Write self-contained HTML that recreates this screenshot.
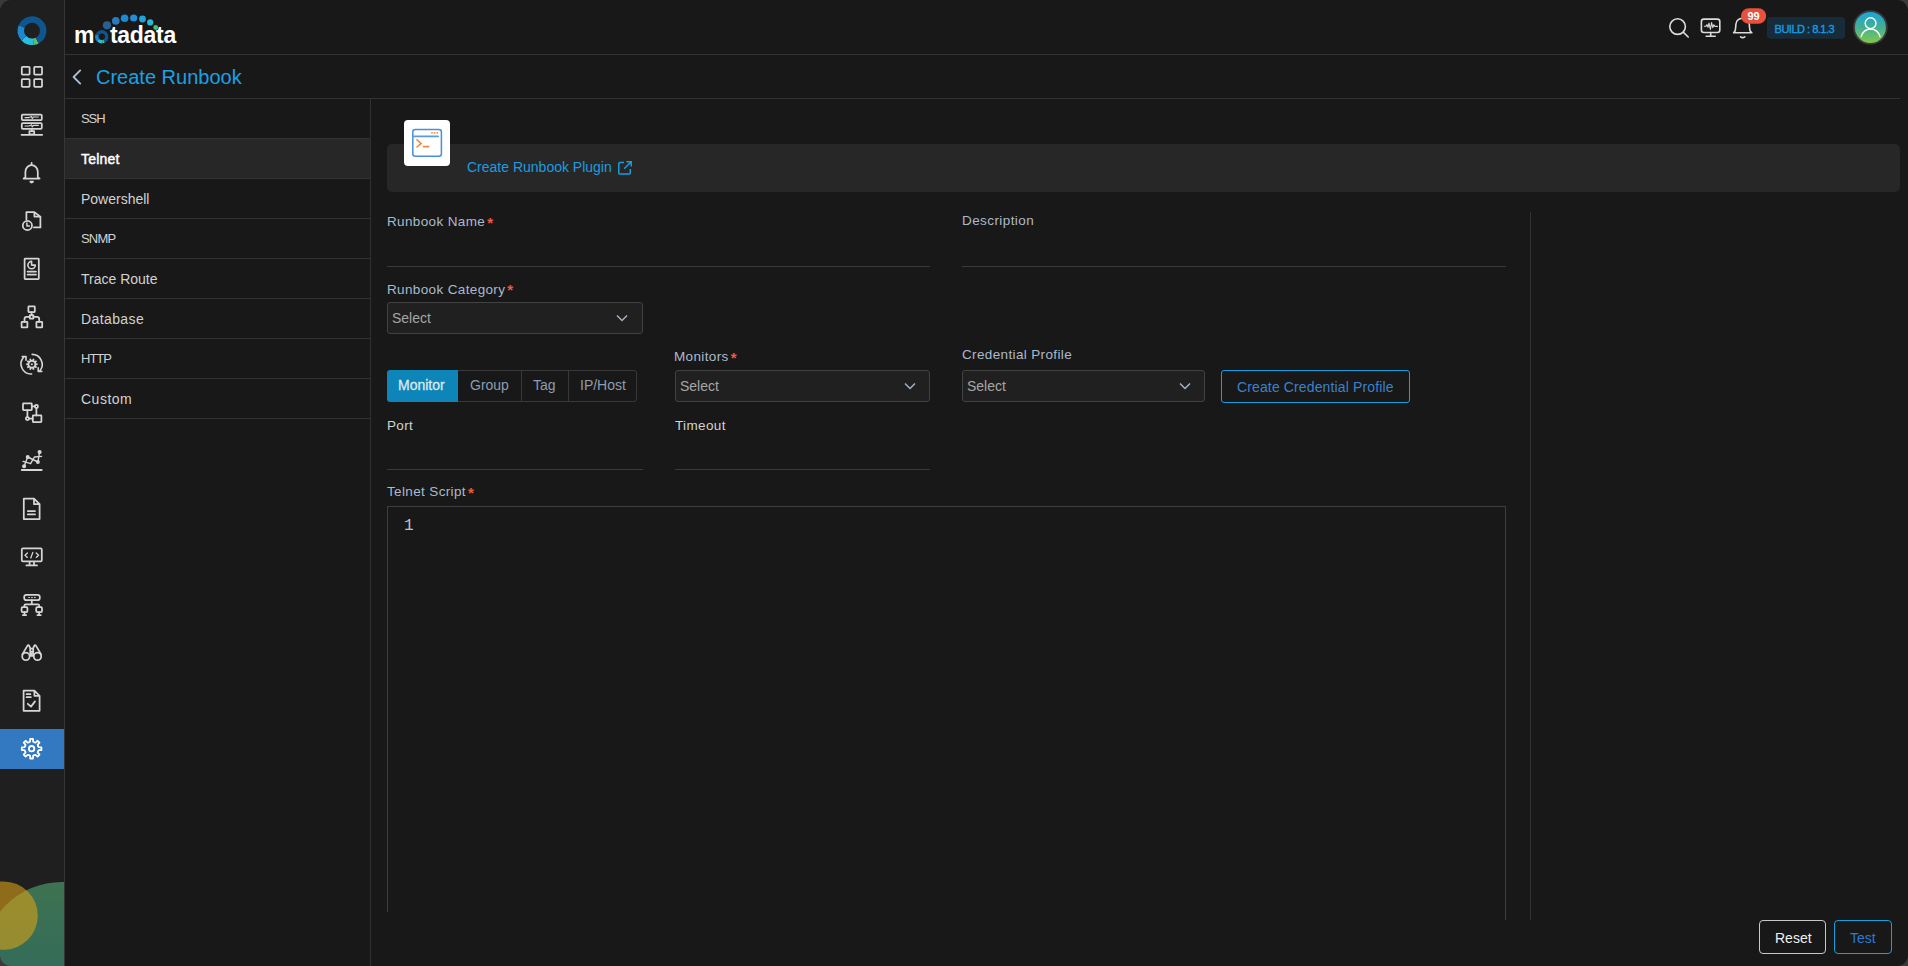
<!DOCTYPE html>
<html><head><meta charset="utf-8">
<style>
*{margin:0;padding:0;box-sizing:border-box}
html,body{width:1908px;height:966px;overflow:hidden;background:#181818;font-family:"Liberation Sans",sans-serif}
.a{position:absolute}
.t{position:absolute;white-space:nowrap;line-height:14px;font-size:14px}
.lbl{color:#abbacc;font-size:13.5px !important;letter-spacing:0.36px;margin-top:-0.8px}
.req{color:#ec5a40;font-size:15px;font-weight:bold;margin-left:2px;position:relative;top:1.5px}
.hl{position:absolute;height:1px;background:#363636}
.vl{position:absolute;width:1px;background:#363636}
.sel{position:absolute;border:1px solid #424242;background:#202020;border-radius:3px;height:32px}
.sel span{position:absolute;left:4px;top:8px;font-size:14px;line-height:14px;color:#a6a6a6}
.sel svg{position:absolute;top:11px}
.nav{position:absolute;left:65px;width:305px;height:40px;border-bottom:1px solid #323232}
.nav span{position:absolute;left:16px;top:13px;font-size:14px;line-height:14px;color:#d2d2d2}
</style></head>
<body>
<!-- sidebar -->
<div class="a" style="left:0;top:0;width:64px;height:966px;background:#1f1f1f"></div>
<div class="vl" style="left:64px;top:0;height:966px;background:#363636"></div>


<!-- sidebar icons -->
<svg class="a" style="left:0;top:0" width="64" height="966" viewBox="0 0 64 966">
<path d="M37.23 40.54 A11.15 11.15 0 0 1 33.36 41.77" stroke="#5dbd6a" stroke-width="6.5" fill="none"/><path d="M33.36 41.77 A11.15 11.15 0 0 1 23.85 38.30" stroke="#2bbde0" stroke-width="6.5" fill="none"/><path d="M23.85 38.30 A11.15 11.15 0 0 1 21.66 26.52" stroke="#1e86cc" stroke-width="6.5" fill="none"/><path d="M21.66 26.52 A11.15 11.15 0 1 1 37.23 40.54" stroke="#0e5690" stroke-width="6.5" fill="none"/>
<g fill="none" stroke="#d6d6d6" stroke-width="1.75" stroke-linecap="round" stroke-linejoin="round">
<!-- grid -->
<rect x="21.8" y="66.8" width="7.8" height="7.8" rx="0.8"/><rect x="34.2" y="66.8" width="7.8" height="7.8" rx="0.8"/>
<rect x="21.8" y="79" width="7.8" height="7.8" rx="0.8"/><rect x="34.2" y="79" width="7.8" height="7.8" rx="0.8"/>
<!-- server -->
<rect x="21.8" y="114.5" width="20" height="5.6" rx="1"/><rect x="21.8" y="123" width="20" height="5.8" rx="1"/>
<path d="M21.5 134.8 H42.2 M31.8 128.8 V131.2 M29.4 131.2 H34.2 V134.4 H29.4 Z" />
<path d="M25 117.6 H29 L31.6 116.4 L32.2 118.6 L33.4 117 H38.4 M25 126 H29 L31.6 124.8 L32.2 127 L33.4 125.4 H38.4" stroke-width="1.1"/>
<!-- bell -->
<path d="M31.6 162.8 V164.6 M25.4 177.4 V172 A6.2 6.8 0 0 1 37.8 172 V177.4 L39.6 178.5 H23.6 Z M30.3 181.7 H33 L31.65 182.6 Z"/>
<!-- doc clock -->
<path d="M26.4 219.4 V212.2 H34.4 L40.4 216.6 V227.4 H33.9 M34.4 212.2 V216.6 H40.4"/>
<circle cx="27.4" cy="225.5" r="4.6"/><path d="M26.9 222.9 V226.1 H29.4" stroke-width="1.5"/>
<!-- report -->
<rect x="24.6" y="258.6" width="14.2" height="20.4" rx="0.6"/>
<path d="M31.6 261.4 A3.7 3.7 0 1 0 35.3 265.1 H31.6 Z" stroke-width="1.6"/>
<path d="M27.6 271.6 H36 M27.6 274.6 H36"/>
<!-- hierarchy -->
<rect x="28.4" y="306.4" width="6.4" height="5.6" rx="0.5"/><rect x="29.8" y="315" width="3.6" height="3.6" rx="0.3"/>
<rect x="21.6" y="321.8" width="5.8" height="5.6" rx="0.5"/><rect x="36.4" y="321.8" width="5.8" height="5.6" rx="0.5"/>
<path d="M31.6 312 V315 M29.8 316.8 H26.6 Q24.5 316.8 24.5 319 V321.8 M33.4 316.8 H36.8 Q39.2 316.8 39.2 319 V321.8"/>
<!-- gear cycle -->
<path d="M31.6 374 A10 10 0 0 1 23.4 357.6 M32.2 354.4 A10 10 0 0 1 40 370.6" stroke-width="1.6"/>
<path d="M22.2 356.6 H26 V360.2 M38.2 367.8 V371.4 H41.8" stroke-width="1.6"/>
<path d="M36.08 363.20 L37.64 363.38 L37.64 365.02 L36.08 365.20 L35.87 365.85 L37.03 366.91 L36.07 368.24 L34.69 367.47 L34.15 367.87 L34.45 369.41 L32.90 369.91 L32.24 368.49 L31.56 368.49 L30.90 369.91 L29.35 369.41 L29.65 367.87 L29.11 367.47 L27.73 368.24 L26.77 366.91 L27.93 365.85 L27.72 365.20 L26.16 365.02 L26.16 363.38 L27.72 363.20 L27.93 362.55 L26.77 361.49 L27.73 360.16 L29.11 360.93 L29.65 360.53 L29.35 358.99 L30.90 358.49 L31.56 359.91 L32.24 359.91 L32.90 358.49 L34.45 358.99 L34.15 360.53 L34.69 360.93 L36.07 360.16 L37.03 361.49 L35.87 362.55 Z" fill="#d6d6d6" stroke="none"/>
<circle cx="31.9" cy="364.2" r="2.5" fill="#1f1f1f" stroke="none"/><circle cx="31.9" cy="364.2" r="1" fill="#d6d6d6" stroke="none"/>
<!-- flow -->
<rect x="23" y="403.4" width="8.8" height="6.6" rx="0.5"/><rect x="32.8" y="415.4" width="8.6" height="6.6" rx="0.5"/>
<circle cx="36.4" cy="406.4" r="1.6"/><circle cx="27.4" cy="418.6" r="1.6"/>
<path d="M31.8 406.4 H34.8 M36.4 408 V415.4 M27.4 410 V417 M29 418.6 H32.8"/>
<!-- chart -->
<path d="M21.8 470.1 H41.6" stroke-width="2"/>
<path d="M24.1 466.3 L27.7 457 L37.9 462 L39.6 452.1" stroke-width="1.4"/>
<path d="M23.1 461.4 L30.6 463.7 L34.4 457 L41.6 456.4" stroke-width="1.4"/>
<circle cx="24.1" cy="466.3" r="1.2" fill="#d6d6d6"/><circle cx="27.7" cy="457" r="1.1" fill="#d6d6d6"/><circle cx="37.9" cy="462" r="1.1" fill="#d6d6d6"/><circle cx="39.6" cy="452.1" r="1.2" fill="#d6d6d6"/>
<!-- doc -->
<path d="M23.8 498.6 H34 L39.6 504.2 V519 H23.8 Z M34 498.6 V504.2 H39.6"/>
<path d="M27.8 511 H35 M27.8 514.4 H35"/>
<!-- monitor code -->
<rect x="21.8" y="548.4" width="20" height="13" rx="1.2"/>
<path d="M29.6 561.8 V565 M34 561.8 V565 M26.4 565.4 H37"/>
<path d="M27.4 553 L25 555.2 L27.4 557.4 M36.2 553 L38.6 555.2 L36.2 557.4 M32.8 552.4 L30.8 558" stroke-width="1.3"/>
<!-- network -->
<rect x="24.2" y="594.8" width="15.6" height="5.4" rx="2.2"/>
<path d="M31.8 600.2 V604.4 M24.4 607 V605.6 Q24.4 604.4 25.6 604.4 H38 Q39.2 604.4 39.2 605.6 V607"/>
<rect x="21.6" y="607.2" width="5.8" height="4.8" rx="1"/><rect x="36.2" y="607.2" width="5.8" height="4.8" rx="1"/>
<path d="M24.5 612 V614.8 M22.8 615 H26.2 M39.1 612 V614.8 M37.4 615 H40.8"/>
<circle cx="29" cy="597.5" r="0.3" stroke-width="0.9"/><circle cx="31.9" cy="597.5" r="0.3" stroke-width="0.9"/><circle cx="34.8" cy="597.5" r="0.3" stroke-width="0.9"/>
<!-- binoculars -->
<circle cx="25.9" cy="656.4" r="3.7"/><circle cx="37.5" cy="656.4" r="3.7"/>
<path d="M22.3 654.4 L27.5 645.6 Q28.3 644.6 29.2 645.8 L30.2 648.2 V655.4 M41.1 654.4 L35.9 645.6 Q35.1 644.6 34.2 645.8 L33.2 648.2 V655.4 M30.2 648.6 H33.2 M30.2 651.6 H33.2 M30.2 655.8 H33.2"/>
<rect x="30.6" y="652.4" width="2.2" height="2.6" fill="#d6d6d6" stroke="none"/>
<!-- checklist -->
<path d="M23.6 690.6 H34.4 L39.6 695.8 V710.8 H23.6 Z M34.4 690.6 V695.8 H39.6"/>
<path d="M26.6 694.2 H30.4 M26.6 697.2 H30.8"/>
<path d="M27.8 703.8 L31 706.6 L35 701.4"/>
</g>
<!-- settings active -->
<rect x="0" y="729" width="64" height="40" fill="#3379c2"/>
<g fill="none" stroke="#fff" stroke-width="1.8" stroke-linejoin="round">
<path d="M28.96 742.33 L30.08 741.56 L30.22 738.90 L32.98 738.90 L33.12 741.56 L34.24 742.33 L35.58 742.58 L37.56 740.79 L39.51 742.74 L37.72 744.72 L37.97 746.06 L38.74 747.18 L41.40 747.32 L41.40 750.08 L38.74 750.22 L37.97 751.34 L37.72 752.68 L39.51 754.66 L37.56 756.61 L35.58 754.82 L34.24 755.07 L33.12 755.84 L32.98 758.50 L30.22 758.50 L30.08 755.84 L28.96 755.07 L27.62 754.82 L25.64 756.61 L23.69 754.66 L25.48 752.68 L25.23 751.34 L24.46 750.22 L21.80 750.08 L21.80 747.32 L24.46 747.18 L25.23 746.06 L25.48 744.72 L23.69 742.74 L25.64 740.79 L27.62 742.58 Z"/>
<circle cx="31.6" cy="748.7" r="2.7"/>
</g>
<!-- decorations -->
<defs><linearGradient id="gg" x1="0" y1="0" x2="0" y2="1"><stop offset="0" stop-color="#3e7350"/><stop offset="1" stop-color="#2b6662"/></linearGradient></defs>
<circle cx="62" cy="962" r="80" fill="url(#gg)"/>
<circle cx="3.6" cy="915.6" r="34.2" fill="#d8a018" fill-opacity="0.6"/>
</svg>

<!-- header logo -->
<svg class="a" style="left:64px;top:0" width="120" height="54" viewBox="64 0 120 54">
<circle cx="107" cy="25.3" r="4.1" fill="#2b5f8e"/>
<circle cx="115.8" cy="20.9" r="3.8" fill="#2a7abb"/>
<circle cx="124.6" cy="18.3" r="3.8" fill="#1f88d3"/>
<circle cx="133.7" cy="18" r="3.6" fill="#1f90d8"/>
<circle cx="142.5" cy="19" r="3.4" fill="#22a2da"/>
<circle cx="150.2" cy="22.4" r="3.1" fill="#2bb8d2"/>
<circle cx="155.7" cy="27.5" r="2.4" fill="#4cbf70"/>
<path d="M104.15 41.11 A5.0 5.0 0 0 1 102.41 41.66" stroke="#5dbd6a" stroke-width="3.4" fill="none"/><path d="M102.41 41.66 A5.0 5.0 0 0 1 98.14 40.11" stroke="#2bbde0" stroke-width="3.4" fill="none"/><path d="M98.14 40.11 A5.0 5.0 0 0 1 97.16 34.83" stroke="#1e86cc" stroke-width="3.4" fill="none"/><path d="M97.16 34.83 A5.0 5.0 0 1 1 104.15 41.11" stroke="#0e5690" stroke-width="3.4" fill="none"/>
</svg>
<div class="t" style="left:74px;top:24.4px;font-size:23px;line-height:23px;font-weight:bold;color:#fff">m</div>
<div class="t" style="left:110px;top:24.4px;font-size:23px;line-height:23px;font-weight:bold;color:#fff;letter-spacing:-0.3px">tadata</div>

<!-- top right -->
<svg class="a" style="left:1660px;top:0" width="248" height="54" viewBox="1660 0 248 54">
<g fill="none" stroke="#dcdcdc" stroke-width="1.6" stroke-linecap="round" stroke-linejoin="round">
<circle cx="1677.6" cy="26.6" r="7.8"/><path d="M1683.2 32.2 L1688.2 37"/>
<rect x="1701.4" y="19.1" width="18.4" height="13.4" rx="2.4"/>
<path d="M1710.7 32.6 V36 M1706.2 36.2 H1715.2"/>
<path d="M1704.4 26.2 H1706 L1707 24.6 L1708 27.4 L1709 23 L1710.4 29.4 L1711.6 22.6 L1712.8 27.6 L1713.8 24.8 L1715 26.4 H1717.4" stroke-width="1.1"/>
<path d="M1733.6 32.8 L1735.2 30.8 Q1735.8 27 1735.9 24.2 Q1736.4 18.6 1742.6 18.2 Q1748.8 18.6 1749.3 24.2 Q1749.4 27 1750 30.8 L1751.8 32.8 Z M1740.6 36.8 Q1742.6 38.4 1744.8 36.8"/>
</g>
<rect x="1741" y="8.2" width="25.2" height="15.6" rx="7.8" fill="#e9513d"/>
<text x="1753.6" y="20.1" text-anchor="middle" font-family="Liberation Sans" font-size="11" font-weight="bold" fill="#fff">99</text>
<rect x="1767" y="17" width="78" height="21.8" rx="3.5" fill="#162d39"/>
<text x="1774.6" y="33" font-family="Liberation Sans" font-size="11" fill="#1a9be2" stroke="#1a9be2" stroke-width="0.35" letter-spacing="-0.5">BUILD : 8.1.3</text>
<defs><linearGradient id="av" x1="0" y1="0" x2="0" y2="1"><stop offset="0" stop-color="#18a4de"/><stop offset="0.5" stop-color="#44b092"/><stop offset="1" stop-color="#86c946"/></linearGradient></defs>
<circle cx="1870.4" cy="27.5" r="16.4" fill="url(#av)" stroke="#3b3b3b" stroke-width="1.8"/>
<g fill="none" stroke="#fff" stroke-width="1.4" stroke-linecap="round">
<circle cx="1870.6" cy="23.2" r="5.4"/>
<path d="M1861.2 36.6 A9.6 9.6 0 0 1 1880 36.6"/>
</g>
</svg>

<!-- header -->
<div class="hl" style="left:65px;top:54px;width:1843px;background:#333"></div>
<div class="hl" style="left:65px;top:98px;width:1835px;background:#333"></div>

<!-- title -->
<svg class="a" style="left:70px;top:68px" width="14" height="18" viewBox="0 0 14 18"><path d="M10.2 2.4 L3.6 9 L10.2 15.6" stroke="#a9bfd8" stroke-width="1.9" fill="none" stroke-linecap="round" stroke-linejoin="round"/></svg>
<div class="t" style="left:96px;top:66.6px;font-size:20px;line-height:20px;color:#1ca0e4">Create Runbook</div>

<!-- left nav -->
<div class="vl" style="left:370px;top:99px;height:867px;background:#303030"></div>
<div class="nav" style="top:99px"><span style="font-size:13px;letter-spacing:-1.1px;top:13px">SSH</span></div>
<div class="nav" style="top:139px;background:#272727"><span style="color:#fff;-webkit-text-stroke:0.45px #fff;top:12.8px;letter-spacing:0.2px">Telnet</span></div>
<div class="nav" style="top:179px"><span>Powershell</span></div>
<div class="nav" style="top:219px"><span style="font-size:13px;letter-spacing:-0.8px;top:13.3px">SNMP</span></div>
<div class="nav" style="top:259px"><span>Trace Route</span></div>
<div class="nav" style="top:299px"><span style="letter-spacing:0.4px">Database</span></div>
<div class="nav" style="top:339px"><span style="font-size:13px;letter-spacing:-1px;top:13.3px">HTTP</span></div>
<div class="nav" style="top:379px"><span style="letter-spacing:0.5px">Custom</span></div>


<!-- plugin card -->
<div class="a" style="left:387px;top:144px;width:1513px;height:48px;background:#272727;border-radius:5px"></div>
<div class="a" style="left:404px;top:120px;width:46px;height:46px;background:#fff;border-radius:4px"></div>
<svg class="a" style="left:404px;top:120px" width="46" height="46" viewBox="0 0 46 46">
<rect x="8.8" y="9.6" width="28.6" height="26.6" rx="2.5" fill="none" stroke="#4a8fd6" stroke-width="1.5"/>
<line x1="9.4" y1="16.3" x2="34.2" y2="16.3" stroke="#5b9bd8" stroke-width="1.7" stroke-linecap="round"/>
<circle cx="28" cy="12.8" r="0.9" fill="#f08a3c"/><circle cx="30.6" cy="12.8" r="0.9" fill="#f08a3c"/><circle cx="33.2" cy="12.8" r="0.9" fill="#f08a3c"/>
<path d="M13 19.8 L17.2 23.4 L13 27" fill="none" stroke="#f08a3c" stroke-width="1.6" stroke-linecap="round"/>
<line x1="19.4" y1="26.6" x2="24.8" y2="26.6" stroke="#f08a3c" stroke-width="1.6" stroke-linecap="round"/>
</svg>
<div class="t" style="left:467px;top:160.1px;color:#1a9de0">Create Runbook Plugin</div>
<svg class="a" style="left:617px;top:160px" width="16" height="16" viewBox="0 0 16 16"><path d="M7 2.6 H3 a1.2 1.2 0 0 0 -1.2 1.2 V12.9 a1.2 1.2 0 0 0 1.2 1.2 H12.1 a1.2 1.2 0 0 0 1.2 -1.2 V9" fill="none" stroke="#1a9de0" stroke-width="1.5"/><path d="M9.4 1.8 H14.2 V6.6 M14 2 L7.2 8.8" fill="none" stroke="#1a9de0" stroke-width="1.5"/></svg>

<!-- row 1 -->
<div class="t lbl" style="left:387px;top:214.9px">Runbook Name<span class="req">*</span></div>
<div class="hl" style="left:387px;top:266px;width:543px;background:#3a3a3a"></div>
<div class="t lbl" style="left:962px;top:215.1px;letter-spacing:0.42px">Description</div>
<div class="hl" style="left:962px;top:266px;width:544px;background:#3a3a3a"></div>

<!-- row 2 -->
<div class="t lbl" style="left:387px;top:282.3px">Runbook Category<span class="req">*</span></div>
<div class="sel" style="left:387px;top:302px;width:256px"><span>Select</span><svg style="left:228px" width="12" height="8" viewBox="0 0 12 8"><path d="M1 1.5 L6 6.5 L11 1.5" fill="none" stroke="#a3b3c6" stroke-width="1.5"/></svg></div>

<!-- row 3 -->
<div class="a" style="left:387px;top:370px;width:250px;height:32px;border:1px solid #383838;border-radius:3px"></div>
<div class="a" style="left:387px;top:370px;width:71px;height:32px;background:#0e85b9;border-radius:3px 0 0 3px"></div>
<div class="vl" style="left:521px;top:371px;height:30px;background:#383838"></div>
<div class="vl" style="left:568px;top:371px;height:30px;background:#383838"></div>
<div class="t" style="left:398px;top:378.4px;color:#dde8ee;-webkit-text-stroke:0.3px #dde8ee">Monitor</div>
<div class="t" style="left:470px;top:378.4px;color:#8c9db0">Group</div>
<div class="t" style="left:533px;top:378.4px;color:#8c9db0">Tag</div>
<div class="t" style="left:580px;top:378.4px;color:#8c9db0">IP/Host</div>

<div class="t lbl" style="left:674px;top:349.8px">Monitors<span class="req">*</span></div>
<div class="sel" style="left:675px;top:370px;width:255px"><span>Select</span><svg style="left:228px" width="12" height="8" viewBox="0 0 12 8"><path d="M1 1.5 L6 6.5 L11 1.5" fill="none" stroke="#a3b3c6" stroke-width="1.5"/></svg></div>

<div class="t lbl" style="left:962px;top:349px">Credential Profile</div>
<div class="sel" style="left:962px;top:370px;width:243px"><span>Select</span><svg style="left:216px" width="12" height="8" viewBox="0 0 12 8"><path d="M1 1.5 L6 6.5 L11 1.5" fill="none" stroke="#a3b3c6" stroke-width="1.5"/></svg></div>
<div class="a" style="left:1221px;top:370px;width:189px;height:33px;border:1.5px solid #14a0e0;border-radius:3px"></div>
<div class="t" style="left:1237px;top:380px;color:#3a82cc;letter-spacing:0.13px">Create Credential Profile</div>

<!-- row 4 -->
<div class="t lbl" style="left:387px;top:419.6px;color:#d2d2d2">Port</div>
<div class="hl" style="left:387px;top:469px;width:256px;background:#3a3a3a"></div>
<div class="t lbl" style="left:675px;top:419.6px;color:#d2d2d2">Timeout</div>
<div class="hl" style="left:675px;top:469px;width:255px;background:#3a3a3a"></div>

<!-- script -->
<div class="t lbl" style="left:387px;top:484.8px">Telnet Script<span class="req">*</span></div>
<div class="a" style="left:387px;top:506px;width:1119px;height:414px;border-top:1px solid #3e3e3e;border-right:1px solid #3e3e3e"></div>
<div class="vl" style="left:387px;top:506px;height:406px;background:#3e3e3e"></div>
<div class="a" style="left:404px;top:517px;font-family:'Liberation Mono',monospace;font-size:16px;line-height:18px;color:#c4c4c4">1</div>

<div class="vl" style="left:1530px;top:212px;height:708px;background:#333"></div>

<!-- buttons -->
<div class="a" style="left:1759px;top:920px;width:67px;height:34px;border:1.5px solid #c8c8c8;border-radius:4px"></div>
<div class="t" style="left:1775px;top:931px;color:#f0f0f0">Reset</div>
<div class="a" style="left:1834px;top:920px;width:58px;height:34px;border:1.5px solid #14a0e0;border-radius:4px"></div>
<div class="t" style="left:1850px;top:931px;color:#2e78d4">Test</div>

<div class="a" style="left:0;top:0;width:1908px;height:966px;border-radius:11px;box-shadow:0 0 0 30px #3a3a3a;pointer-events:none"></div>
</body></html>
